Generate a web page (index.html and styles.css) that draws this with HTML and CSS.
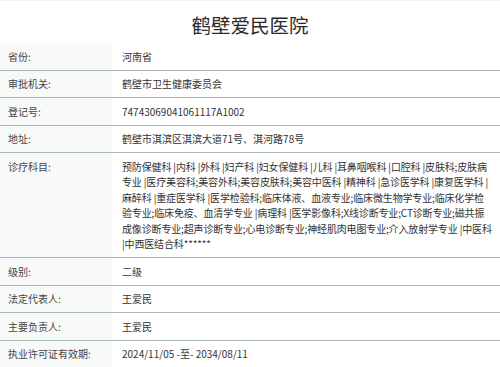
FILE: index.html
```html
<!DOCTYPE html>
<html lang="zh-CN">
<head>
<meta charset="utf-8">
<title>鹤壁爱民医院</title>
<link rel="stylesheet" href="styles.css">
</head>
<body>
<div class="page">
  <h1 class="title">鹤壁爱民医院</h1>
  <table class="info">
    <tr><th>省份:</th><td>河南省</td></tr>
    <tr><th>审批机关:</th><td>鹤壁市卫生健康委员会</td></tr>
    <tr><th>登记号:</th><td>74743069041061117A1002</td></tr>
    <tr><th>地址:</th><td>鹤壁市淇滨区淇滨大道71号、淇河路78号</td></tr>
    <tr><th>诊疗科目:</th><td class="subjects">预防保健科 |内科 |外科 |妇产科 |妇女保健科 |儿科 |耳鼻咽喉科 |口腔科 |皮肤科;皮肤病<br>专业 |医疗美容科;美容外科;美容皮肤科;美容中医科 |精神科 |急诊医学科 |康复医学科 |<br>麻醉科 |重症医学科 |医学检验科;临床体液、血液专业;临床微生物学专业;临床化学检<br>验专业;临床免疫、血清学专业 |病理科 |医学影像科;X线诊断专业;CT诊断专业;磁共振<br>成像诊断专业;超声诊断专业;心电诊断专业;神经肌肉电图专业;介入放射学专业 |中医科<br>|中西医结合科******</td></tr>
    <tr><th>级别:</th><td>二级</td></tr>
    <tr><th>法定代表人:</th><td>王爱民</td></tr>
    <tr><th>主要负责人:</th><td>王爱民</td></tr>
    <tr><th>执业许可证有效期:</th><td>2024/11/05 -至- 2034/08/11</td></tr>
  </table>
</div>
</body>
</html>
```

FILE: styles.css
```css
html, body {
  margin: 0;
  padding: 0;
  background: #ffffff;
}

.page {
  font-family: "Noto Sans CJK SC", "Noto Sans", sans-serif;
  color: #333333;
  font-size: 10px;
}

.title {
  margin: 0;
  height: 43px;
  line-height: 43px;
  text-align: center;
  font-size: 19.5px;
  font-weight: normal;
  color: #2b2b2b;
  border-top: 1px solid #f0f2f2;
  box-sizing: border-box;
  padding-top: 2px;
}

.info {
  width: 100%;
  border-collapse: collapse;
  table-layout: fixed;
}

.info tr {
  border-bottom: 1px solid #a9bbb7;
}

.info th,
.info td {
  padding: 5.5px 8px 5.5px 8px;
  line-height: 15.5px;
  text-align: left;
  vertical-align: top;
  font-weight: normal;
}

.info th {
  width: 96px;
  background: #f8f9f9;
  color: #444444;
}

.info td {
  padding-left: 10px;
  padding-right: 6px;
  color: #333333;
}

.info .subjects {
  white-space: nowrap;
  letter-spacing: -0.15px;
}
```
